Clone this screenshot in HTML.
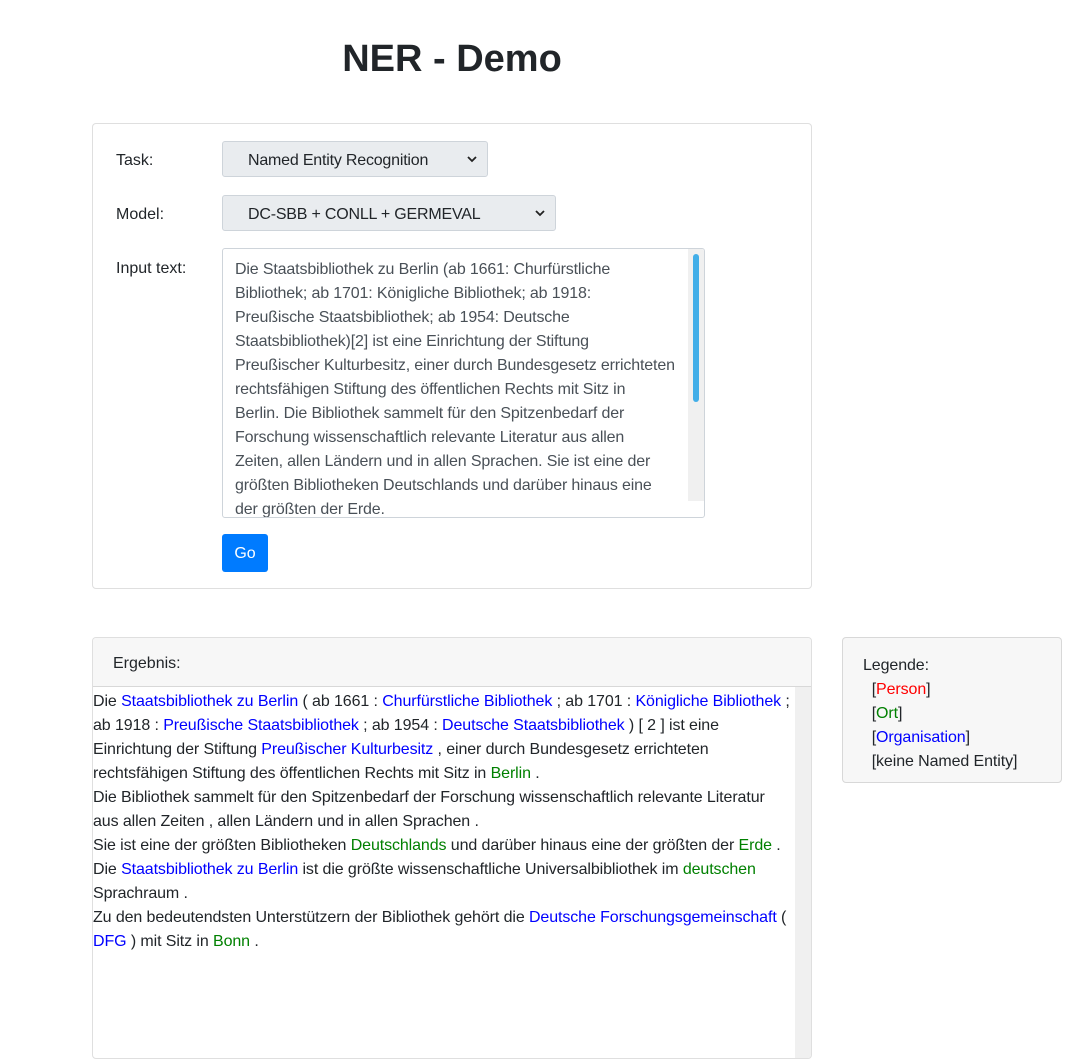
<!DOCTYPE html>
<html><head><meta charset="utf-8"><style>
body{margin:0;background:#fff;font-family:"Liberation Sans",sans-serif;color:#212529;font-size:16px;width:1073px;height:1032px;overflow:hidden;position:relative}
.a{position:absolute}
h1{position:absolute;left:0;width:904px;top:35px;margin:0;text-align:center;font-size:38px;font-weight:bold;line-height:48px;color:#212529}
.card{position:absolute;border:1px solid rgba(0,0,0,.125);border-radius:4px;background:#fff}
.sel{position:absolute;background:#e9ecef;border:1px solid #ced4da;border-radius:3px;height:36px;box-sizing:border-box;line-height:38px;padding-left:25px;font-size:16px;color:#212529;letter-spacing:-0.2px}
.sel svg{position:absolute;top:13px}
.lbl{position:absolute;left:116px;font-size:16px}
.b{color:#0000ff}.g{color:#008000}.r{color:#ff0000}
</style></head><body>
<h1>NER - Demo</h1>
<div class="card" style="left:92px;top:123px;width:718px;height:464px"></div>
<div class="lbl" style="top:152px">Task:</div>
<div class="sel" style="left:222px;top:141px;width:266px">Named Entity Recognition<svg style="left:244px" width="10" height="8" viewBox="0 0 10 8"><path d="M1 2l4 4 4-4" stroke="#222" stroke-width="1.8" fill="none"/></svg></div>
<div class="lbl" style="top:206px">Model:</div>
<div class="sel" style="left:222px;top:195px;width:334px">DC-SBB + CONLL + GERMEVAL<svg style="left:312px" width="10" height="8" viewBox="0 0 10 8"><path d="M1 2l4 4 4-4" stroke="#222" stroke-width="1.8" fill="none"/></svg></div>
<div class="lbl" style="top:260px">Input text:</div>
<div class="a" style="left:222px;top:248px;width:481px;height:268px;border:1px solid #ced4da;border-radius:3px;overflow:hidden">
<div class="a" style="left:12px;top:9px;width:450px;line-height:24px;color:#495057;white-space:nowrap;letter-spacing:-0.15px">Die Staatsbibliothek zu Berlin (ab 1661: Churfürstliche<br>Bibliothek; ab 1701: Königliche Bibliothek; ab 1918:<br>Preußische Staatsbibliothek; ab 1954: Deutsche<br>Staatsbibliothek)[2] ist eine Einrichtung der Stiftung<br>Preußischer Kulturbesitz, einer durch Bundesgesetz errichteten<br>rechtsfähigen Stiftung des öffentlichen Rechts mit Sitz in<br>Berlin. Die Bibliothek sammelt für den Spitzenbedarf der<br>Forschung wissenschaftlich relevante Literatur aus allen<br>Zeiten, allen Ländern und in allen Sprachen. Sie ist eine der<br>größten Bibliotheken Deutschlands und darüber hinaus eine<br>der größten der Erde.</div>
<div class="a" style="left:465px;top:0;width:16px;height:252px;background:#f0f0f0"></div>
<div class="a" style="left:470px;top:5px;width:6px;height:148px;background:#42aee8;border-radius:3px"></div>
</div>
<div class="a" style="left:222px;top:534px;width:46px;height:38px;background:#007bff;border-radius:3px;color:#fff;text-align:center;line-height:40px">Go</div>

<div class="card" style="left:92px;top:637px;width:718px;height:420px;overflow:hidden">
<div class="a" style="left:0;top:0;width:718px;height:48px;background:#f7f7f7;border-bottom:1px solid rgba(0,0,0,.125)"></div>
<div class="a" style="left:20px;top:17px">Ergebnis:</div>
<div class="a" style="left:702px;top:49px;width:16px;height:400px;background:#f0f0f0"></div>
<div class="a" style="left:0;top:52px;line-height:24px;white-space:nowrap;letter-spacing:-0.1px">Die <span class="b">Staatsbibliothek zu Berlin</span> ( ab 1661 : <span class="b">Churfürstliche Bibliothek</span> ; ab 1701 : <span class="b">Königliche Bibliothek</span> ;<br>ab 1918 : <span class="b">Preußische Staatsbibliothek</span> ; ab 1954 : <span class="b">Deutsche Staatsbibliothek</span> ) [ 2 ] ist eine<br>Einrichtung der Stiftung <span class="b">Preußischer Kulturbesitz</span> , einer durch Bundesgesetz errichteten<br>rechtsfähigen Stiftung des öffentlichen Rechts mit Sitz in <span class="g">Berlin</span> .<br>Die Bibliothek sammelt für den Spitzenbedarf der Forschung wissenschaftlich relevante Literatur<br>aus allen Zeiten , allen Ländern und in allen Sprachen .<br>Sie ist eine der größten Bibliotheken <span class="g">Deutschlands</span> und darüber hinaus eine der größten der <span class="g">Erde</span> .<br>Die <span class="b">Staatsbibliothek zu Berlin</span> ist die größte wissenschaftliche Universalbibliothek im <span class="g">deutschen</span><br>Sprachraum .<br>Zu den bedeutendsten Unterstützern der Bibliothek gehört die <span class="b">Deutsche Forschungsgemeinschaft</span> (<br><span class="b">DFG</span> ) mit Sitz in <span class="g">Bonn</span> .</div>
</div>

<div class="card" style="left:842px;top:637px;width:218px;height:144px;background:#f7f7f7">
<div class="a" style="left:20px;top:16px;line-height:24px;white-space:nowrap;letter-spacing:-0.1px">Legende:<br>&nbsp;&nbsp;[<span class="r">Person</span>]<br>&nbsp;&nbsp;[<span class="g">Ort</span>]<br>&nbsp;&nbsp;[<span class="b">Organisation</span>]<br>&nbsp;&nbsp;[keine Named Entity]</div>
</div>
</body></html>
